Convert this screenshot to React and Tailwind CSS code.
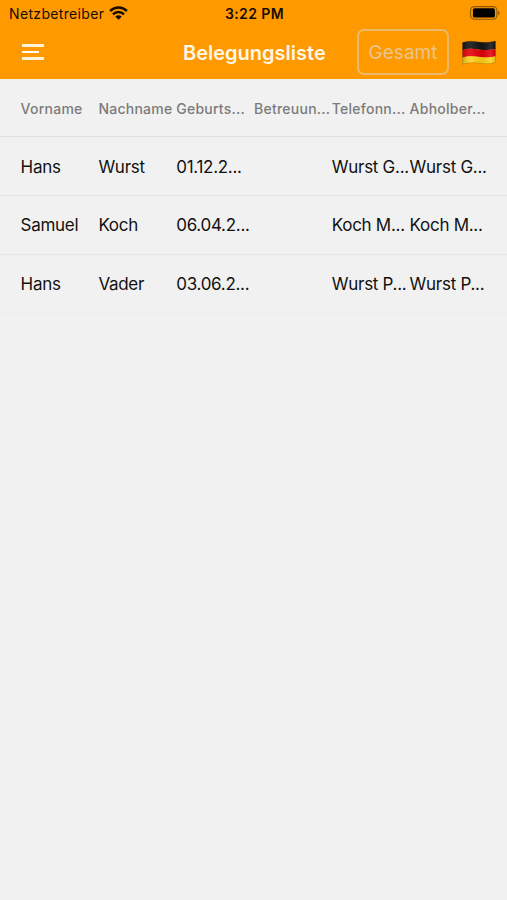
const columns = ['Vorname', 'Nachname', 'Geburts...', 'Betreuun...', 'Telefonn...', 'Abholber...'];

const rows = [
  ['Hans', 'Wurst', '01.12.2...', '', 'Wurst G...', 'Wurst G...'],
  ['Samuel', 'Koch', '06.04.2...', '', 'Koch M...', 'Koch M...'],
  ['Hans', 'Vader', '03.06.2...', '', 'Wurst P...', 'Wurst P...'],
];

function WifiIcon() {
  return (
    <svg className="-mt-[2px] ml-[5px] h-[14px] w-[19px]" viewBox="0 0 19 14" fill="none" stroke="#160d00" strokeWidth="2.5">
      <path d="M1.1 5a12 12 0 0 1 16.8 0" />
      <path d="M4 8.3a7.8 7.8 0 0 1 11 0" />
      <path d="M9.5 13.8 6.3 10.7a4.5 4.5 0 0 1 6.4 0Z" fill="#160d00" stroke="none" />
    </svg>
  );
}

function BatteryIcon() {
  return (
    <svg className="-mt-px h-[14px] w-[30px]" viewBox="0 0 30 14" fill="none">
      <rect x="0.6" y="0.6" width="26.3" height="12.6" rx="3.6" stroke="#8d5600" strokeWidth="1.1" />
      <rect x="2.9" y="2.3" width="22" height="9.2" rx="1.6" fill="#000" />
      <path d="M28.2 4.7c1.9.8 1.9 3.6 0 4.4Z" fill="#8d5600" />
    </svg>
  );
}

function GermanFlag() {
  return (
    <svg className="-mt-[2px] h-[25px] w-[34px]" viewBox="0 0 34 25">
      <defs>
        <linearGradient id="shade" x1="0" x2="1" y1="0" y2="0">
          <stop offset="0" stopColor="#000" stopOpacity="0.2" />
          <stop offset="0.25" stopColor="#fff" stopOpacity="0.1" />
          <stop offset="0.58" stopColor="#000" stopOpacity="0.08" />
          <stop offset="0.85" stopColor="#fff" stopOpacity="0.12" />
          <stop offset="1" stopColor="#000" stopOpacity="0.12" />
        </linearGradient>
      </defs>
      <path d="M.5 2.6C6 .8 11 1.1 17 1.9s11 .3 16.5-.9V9C28 10.3 23 10.3 17 9.5S6 8.4 .5 10.2Z" fill="#141414" />
      <path d="M.5 10.1C6 8.3 11 8.6 17 9.4s11 .9 16.5-.5v7.5C28 17.8 23 17.7 17 16.9S6 15.8 .5 17.6Z" fill="#e5000c" />
      <path d="M.5 17.5C6 15.7 11 16 17 16.8s11 .9 16.5-.5v6.3C28 24 23 23.9 17 23.1S6 22.6 .5 24.2Z" fill="#ffd21c" />
      <path d="M.5 2.6C6 .8 11 1.1 17 1.9s11 .3 16.5-.9v21.6C28 24 23 23.9 17 23.1S6 22.6 .5 24.2Z" fill="url(#shade)" stroke="#6b4a00" strokeOpacity="0.4" strokeWidth="0.6" />
    </svg>
  );
}

export default function App() {
  return (
    <div className="flex h-[900px] w-[507px] flex-col overflow-hidden bg-[#f1f1f1] font-['Inter','Liberation_Sans',sans-serif]">
      <header className="flex h-[79px] flex-col bg-[#ff9900]">
        <div className="grid h-[27px] grid-cols-[1fr_auto_1fr] items-center pr-[7px] pl-[9px] text-[#160d00]">
          <div className="flex items-center">
            <span className="text-[14px] tracking-[0.34px]">Netzbetreiber</span>
            <WifiIcon />
          </div>
          <span className="text-[14px] font-semibold tracking-[0.4px]">3:22 PM</span>
          <div className="flex justify-end">
            <BatteryIcon />
          </div>
        </div>
        <div className="grid h-[52px] grid-cols-[161px_auto_1fr] items-center pr-[11px] pl-[22px]">
          <button aria-label="Menu" className="-mt-[3px] flex w-[22px] flex-col gap-[4px]">
            <span className="h-[3px] w-[22px] bg-[#fff3dc]" />
            <span className="h-[2px] w-[17px] bg-[#fffaf0]" />
            <span className="h-[3px] w-[22px] bg-[#fff3dc]" />
          </button>
          <h1 className="-mt-px text-[20px] font-semibold text-[#fff6e6]">Belegungsliste</h1>
          <div className="flex items-center justify-end gap-[13px]">
            <button className="-mt-[2px] flex h-[46px] w-[92px] shrink-0 items-center justify-center rounded-[7px] border-2 border-[#ecb96b] pt-[2px] text-[19px] text-[#e9c58d]">
              Gesamt
            </button>
            <GermanFlag />
          </div>
        </div>
      </header>
      <main>
        <div className="grid h-[58px] grid-cols-[repeat(6,77.8px)] items-center border-b border-[#dfdfdf] pt-[2px] pl-[20.6px] text-[14px] font-medium tracking-[0.25px] text-[#7b7b7b]">
          {columns.map((label) => (
            <span key={label} className="whitespace-nowrap">{label}</span>
          ))}
        </div>
        {rows.map((row, i) => (
          <div
            key={i}
            className="grid h-[58.8px] grid-cols-[repeat(6,77.8px)] items-center border-b border-[#e4e4e4] pt-[3px] pl-[20.6px] text-[17px] tracking-[-0.28px] text-[#111] last:border-[#eeeeee]"
          >
            {row.map((cell, j) => (
              <span key={j} className="whitespace-nowrap">{cell}</span>
            ))}
          </div>
        ))}
      </main>
    </div>
  );
}
